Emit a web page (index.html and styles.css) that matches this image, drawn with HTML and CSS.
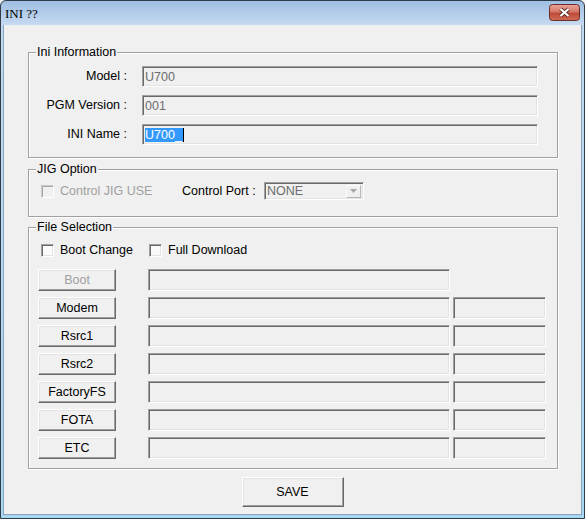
FILE: index.html
```html
<!DOCTYPE html>
<html>
<head>
<meta charset="utf-8">
<title>INI ??</title>
<link rel="stylesheet" href="styles.css">
</head>
<body>
<div class="window">
  <div class="titlebar">
    <span class="title">INI ??</span>
    <span class="close">
      <svg width="31" height="17" viewBox="0 0 31 17">
        <defs>
          <linearGradient id="cg" x1="0" y1="0" x2="0" y2="1">
            <stop offset="0" stop-color="#eaa79a"/>
            <stop offset="0.45" stop-color="#d4776a"/>
            <stop offset="0.55" stop-color="#bf4b39"/>
            <stop offset="1" stop-color="#cf6c55"/>
          </linearGradient>
        </defs>
        <rect x="0.5" y="0.5" width="30" height="16" rx="3" fill="url(#cg)" stroke="#6a2e26"/>
        <path d="M11.5 5 L19.5 12 M19.5 5 L11.5 12" stroke="#5a261d" stroke-width="3.8"/>
        <path d="M11.5 5 L19.5 12 M19.5 5 L11.5 12" stroke="#ffffff" stroke-width="2.2"/>
      </svg>
    </span>
  </div>
  <div class="client">
    <div class="group ini">
      <span class="legend">Ini Information</span>
      <div class="form-grid">
        <span class="label">Model :</span>
        <div class="field sunken">U700</div>
        <span class="label">PGM Version :</span>
        <div class="field sunken">001</div>
        <span class="label">INI Name :</span>
        <div class="field sunken"><span class="sel">U700_</span><span class="caret"></span></div>
      </div>
    </div>

    <div class="group jig">
      <span class="legend">JIG Option</span>
      <div class="jig-row">
        <span class="check-item jig-check disabled"><span class="box sunken"></span><span class="check-label">Control JIG USE</span></span>
        <span class="port-label">Control Port :</span>
        <div class="combo sunken">
          <span class="combo-text">NONE</span>
          <span class="drop"><svg width="7" height="4" viewBox="0 0 7 4"><path d="M0 0 H7 L3.5 4 Z" fill="#a8a8a8"/></svg></span>
        </div>
      </div>
    </div>

    <div class="group files">
      <span class="legend">File Selection</span>
      <div class="check-row">
        <span class="check-item boot-change"><span class="box sunken"></span><span class="check-label">Boot Change</span></span>
        <span class="check-item"><span class="box sunken"></span><span class="check-label">Full Download</span></span>
      </div>
      <div class="file-rows">
        <div class="file-row">
          <span class="btn raised disabled">Boot</span>
          <div class="path sunken"></div>
        </div>
        <div class="file-row">
          <span class="btn raised">Modem</span>
          <div class="path sunken"></div>
          <div class="extra sunken"></div>
        </div>
        <div class="file-row">
          <span class="btn raised">Rsrc1</span>
          <div class="path sunken"></div>
          <div class="extra sunken"></div>
        </div>
        <div class="file-row">
          <span class="btn raised">Rsrc2</span>
          <div class="path sunken"></div>
          <div class="extra sunken"></div>
        </div>
        <div class="file-row">
          <span class="btn raised">FactoryFS</span>
          <div class="path sunken"></div>
          <div class="extra sunken"></div>
        </div>
        <div class="file-row">
          <span class="btn raised">FOTA</span>
          <div class="path sunken"></div>
          <div class="extra sunken"></div>
        </div>
        <div class="file-row">
          <span class="btn raised">ETC</span>
          <div class="path sunken"></div>
          <div class="extra sunken"></div>
        </div>
      </div>
    </div>

    <span class="save raised">SAVE</span>
  </div>
</div>
</body>
</html>
```

FILE: styles.css
```css
html, body {
  margin: 0;
  padding: 0;
  background: #f0f0f0;
}

body {
  font-family: "Liberation Sans", Arial, sans-serif;
  font-size: 12.5px;
  color: #000;
}

.window {
  width: 585px;
  height: 519px;
  box-sizing: border-box;
  border: 1px solid #2e3b49;
  border-radius: 6px 6px 0 0;
  background: linear-gradient(to bottom, #9fbee3 0, #c6daf0 24px, #c1d9ef 25px, #a9d7f1 100%);
  display: flex;
  flex-direction: column;
  overflow: hidden;
}

.titlebar {
  height: 24px;
  flex: none;
  display: flex;
  align-items: flex-start;
  justify-content: space-between;
}

.title {
  font-family: "Liberation Serif", "Times New Roman", serif;
  font-size: 13px;
  line-height: 13px;
  margin: 6px 0 0 4px;
  color: #000;
}

.close {
  display: block;
  width: 31px;
  height: 17px;
  margin: 3px 4px 0 0;
}

.close svg {
  display: block;
}

.client {
  flex: 1;
  margin: 0 2px 3px 2px;
  background: #f0f0f0;
  padding-top: 27px;
  display: flex;
  flex-direction: column;
  align-items: flex-start;
  border-left: 1px solid #8aa3bd;
  border-right: 1px solid #8aa3bd;
  border-bottom: 1px solid #8aa3bd;
}

/* group boxes */
.group {
  position: relative;
  width: 530px;
  box-sizing: border-box;
  margin-left: 24px;
  border: 1px solid #a0a0a0;
  box-shadow: inset 1px 1px 0 #fff, 1px 1px 0 #fff;
}

.legend {
  position: absolute;
  left: 7px;
  top: -8px;
  padding: 0 1px;
  line-height: 14px;
  background: #f0f0f0;
  white-space: nowrap;
}

/* 3D borders */
.sunken {
  box-sizing: border-box;
  border: 1px solid;
  border-color: #a0a0a0 #ffffff #ffffff #a0a0a0;
  box-shadow: inset 1px 1px 0 #696969, inset -1px -1px 0 #e3e3e3;
  background: #f0f0f0;
}

.raised {
  box-sizing: border-box;
  border: 1px solid;
  border-color: #ffffff #696969 #696969 #ffffff;
  box-shadow: inset -1px -1px 0 #a0a0a0, inset 1px 1px 0 #e3e3e3;
  background: #f0f0f0;
}

/* Ini information */
.ini {
  padding: 13px 0 12px 0;
}

.form-grid {
  display: grid;
  grid-template-columns: 98px 396px;
  grid-auto-rows: 21px;
  column-gap: 15px;
  row-gap: 8px;
}

.label {
  text-align: right;
  line-height: 21px;
  white-space: nowrap;
}

.field {
  height: 21px;
  padding: 1px 0 0 2px;
  line-height: 17px;
  color: #6d6d6d;
  display: flex;
  align-items: center;
}

.sel {
  background: #3399ff;
  color: #fff;
  line-height: 14px;
  padding: 0 1px 0 0;
}

.caret {
  display: inline-block;
  width: 1px;
  height: 14px;
  background: #000;
}

/* JIG option */
.jig {
  margin-top: 11px;
  padding: 12px 0 16px 12px;
}

.jig-row {
  display: flex;
  align-items: center;
  height: 18px;
}

.check-item {
  display: flex;
  align-items: center;
  white-space: nowrap;
}

.box {
  width: 13px;
  height: 13px;
  flex: none;
  background: #fafafa;
}

.check-label {
  margin-left: 6px;
  line-height: 14px;
}

.jig-check {
  width: 141px;
}

.disabled .box {
  background: #f0f0f0;
  border-color: #c8c8c8 #fff #fff #c8c8c8;
  box-shadow: inset 1px 1px 0 #a8a8a8;
}

.disabled .check-label,
.btn.disabled {
  color: #a0a0a0;
}

.port-label {
  width: 82px;
  white-space: nowrap;
}

.combo {
  width: 100px;
  height: 18px;
  display: flex;
  align-items: center;
  padding: 0 2px 0 2px;
  color: #6d6d6d;
}

.combo-text {
  flex: 1;
  line-height: 14px;
}

.drop {
  width: 15px;
  height: 13px;
  box-sizing: border-box;
  border: 1px solid;
  border-color: #fafafa #b8b8b8 #b8b8b8 #fafafa;
  background: #f0f0f0;
  display: flex;
  align-items: center;
  justify-content: center;
}

.drop svg {
  display: block;
}

/* file selection */
.files {
  margin-top: 10px;
  padding: 15px 0 9px 0;
}

.check-row {
  display: flex;
  align-items: center;
  height: 14px;
  padding-left: 12px;
}

.boot-change {
  width: 108px;
}

.file-rows {
  margin-top: 12px;
  display: flex;
  flex-direction: column;
  gap: 6px;
}

.file-row {
  display: flex;
  height: 22px;
}

.btn {
  width: 78px;
  height: 22px;
  margin-left: 9px;
  display: flex;
  align-items: center;
  justify-content: center;
  white-space: nowrap;
}

.path {
  width: 302px;
  height: 22px;
  margin-left: 32px;
}

.extra {
  width: 93px;
  height: 22px;
  margin-left: 3px;
}

.save {
  align-self: center;
  width: 102px;
  height: 30px;
  margin-top: 8px;
  display: flex;
  align-items: center;
  justify-content: center;
}
```
